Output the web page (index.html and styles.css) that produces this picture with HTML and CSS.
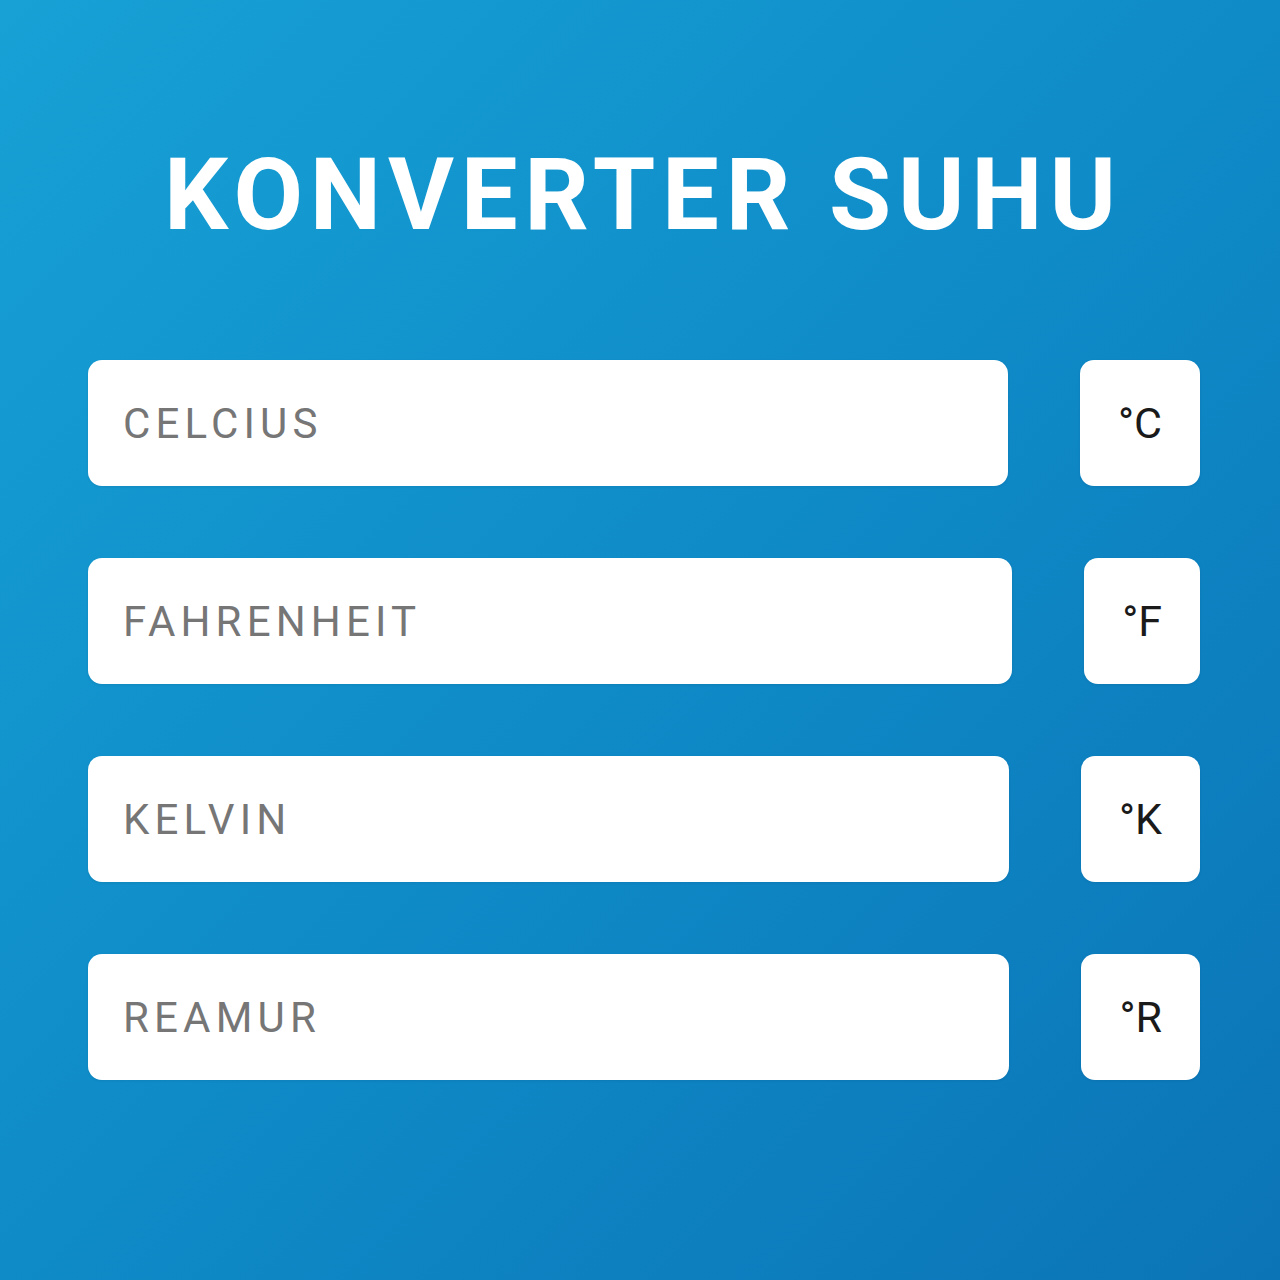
FILE: index.html
```html
<!DOCTYPE html>
<html lang="id">
<head>
<meta charset="utf-8">
<title>Konverter Suhu</title>
<link rel="stylesheet" href="styles.css">
</head>
<body>
<main class="app">
  <h1 class="title">KONVERTER SUHU</h1>
  <div class="rows">
    <div class="row">
      <input class="field" type="text" placeholder="CELCIUS">
      <div class="unit">°C</div>
    </div>
    <div class="row">
      <input class="field" type="text" placeholder="FAHRENHEIT">
      <div class="unit">°F</div>
    </div>
    <div class="row">
      <input class="field" type="text" placeholder="KELVIN">
      <div class="unit">°K</div>
    </div>
    <div class="row">
      <input class="field" type="text" placeholder="REAMUR">
      <div class="unit">°R</div>
    </div>
  </div>
</main>
</body>
</html>
```

FILE: styles.css
```css
html, body {
  margin: 0;
  padding: 0;
}
body {
  width: 1280px;
  height: 1280px;
  background: linear-gradient(135deg, #17a1d5 0%, #0f8bc8 50%, #0b74b7 100%);
  font-family: Roboto, "Noto Sans", sans-serif;
  overflow: hidden;
}
.app {
  display: flex;
  flex-direction: column;
  padding-top: 144px;
}
.title {
  margin: 0;
  text-align: center;
  color: #ffffff;
  font-size: 101px;
  font-weight: 700;
  line-height: 1;
  letter-spacing: 0.067em;
  padding-left: 0.067em;
}
.rows {
  display: flex;
  flex-direction: column;
  gap: 72px;
  margin-top: 115px;
  padding: 0 80px 0 88px;
}
.row {
  display: flex;
  gap: 72px;
  height: 126px;
}
.field {
  flex: 1;
  min-width: 0;
  height: 126px;
  box-sizing: border-box;
  border: none;
  border-radius: 14px;
  background: #ffffff;
  padding: 0 35px;
  font-family: Roboto, "Noto Sans", sans-serif;
  font-size: 42px;
  letter-spacing: 0.123em;
  color: #212121;
  outline: none;
  box-shadow: 0 1px 3px rgba(0, 0, 0, 0.08);
}
.field::placeholder {
  color: #767676;
}
.unit {
  display: flex;
  align-items: center;
  justify-content: center;
  height: 126px;
  box-sizing: border-box;
  padding: 0 38px;
  border-radius: 14px;
  background: #ffffff;
  color: #1a1a1a;
  font-size: 43px;
  box-shadow: 0 1px 3px rgba(0, 0, 0, 0.08);
}
```
